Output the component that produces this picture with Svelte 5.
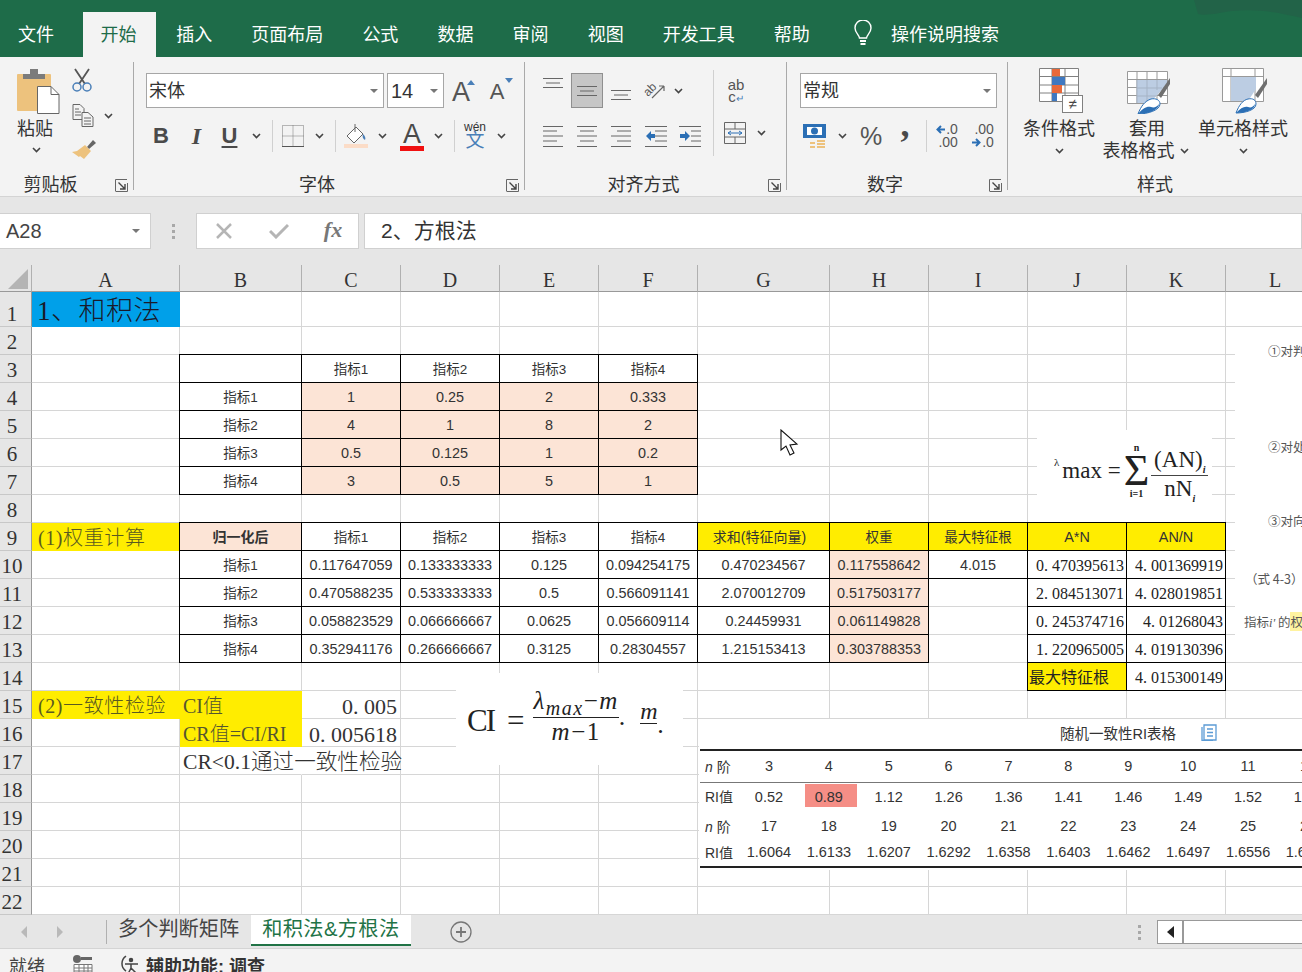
<script>
  const tabs = ['文件', '开始', '插入', '页面布局', '公式', '数据', '审阅', '视图', '开发工具', '帮助'];
  const cols = ['A', 'B', 'C', 'D', 'E', 'F', 'G', 'H', 'I', 'J', 'K', 'L'];
  const rowNums = Array.from({ length: 22 }, (_, i) => i + 1);

  const cells = {};
  const put = (ref, t, k) => (cells[ref] = { t, k });

  put('A1', '1、和积法', 'blue title');
  put('A9', '(1)权重计算', 'yel label');
  put('A15', '(2)一致性检验', 'yel label');

  // first matrix
  const m1 = [
    ['1', '0.25', '2', '0.333'],
    ['4', '1', '8', '2'],
    ['0.5', '0.125', '1', '0.2'],
    ['3', '0.5', '5', '1']
  ];
  put('B3', '', 'b');
  ['C', 'D', 'E', 'F'].forEach((c, i) => put(c + '3', '指标' + (i + 1), 'b c z'));
  m1.forEach((row, r) => {
    put('B' + (r + 4), '指标' + (r + 1), 'b c z');
    row.forEach((v, i) => put('CDEF'[i] + (r + 4), v, 'b c peach'));
  });

  // normalised matrix and weights
  put('B9', '归一化后', 'b c peach strong');
  ['C', 'D', 'E', 'F'].forEach((c, i) => put(c + '9', '指标' + (i + 1), 'b c z'));
  put('G9', '求和(特征向量)', 'b c yel sum');
  put('H9', '权重', 'b c z yel');
  put('I9', '最大特征根', 'b c z yel');
  put('J9', 'A*N', 'b c yel');
  put('K9', 'AN/N', 'b c yel');
  const m2 = [
    ['0.117647059', '0.133333333', '0.125', '0.094254175', '0.470234567', '0.117558642'],
    ['0.470588235', '0.533333333', '0.5', '0.566091141', '2.070012709', '0.517503177'],
    ['0.058823529', '0.066666667', '0.0625', '0.056609114', '0.24459931', '0.061149828'],
    ['0.352941176', '0.266666667', '0.3125', '0.28304557', '1.215153413', '0.303788353']
  ];
  const m3 = [
    ['0.470395613', '4.001369919'],
    ['2.084513071', '4.028019851'],
    ['0.245374716', '4.01268043'],
    ['1.220965005', '4.019130396']
  ];
  m2.forEach((row, r) => {
    put('B' + (r + 10), '指标' + (r + 1), 'b c z');
    row.forEach((v, i) => put('CDEFGH'[i] + (r + 10), v, i === 5 ? 'b c peach' : 'b c'));
    put('J' + (r + 10), m3[r][0], 'b sn');
    put('K' + (r + 10), m3[r][1], 'b sn');
  });
  put('I10', '4.015', 'b c');
  put('J14', '最大特征根', 'b yel maxroot');
  put('K14', '4.015300149', 'b sn');

  // consistency check
  put('B15', 'CI值', 'yel label tight');
  put('B16', 'CR值=CI/RI', 'yel label tight');
  put('C15', '0.005', 'big');
  put('C16', '0.005618', 'big');
  put('B17', 'CR<0.1通过一致性检验', 'wide');

  const cell = (c, r) => cells[c + r] ?? { t: '', k: '' };
  const isSerifNum = (k) => k.includes('sn') || k.includes('big');

  const riHead1 = ['3', '4', '5', '6', '7', '8', '9', '10', '11', '12'];
  const riVal1 = ['0.52', '0.89', '1.12', '1.26', '1.36', '1.41', '1.46', '1.49', '1.52', '1.54'];
  const riHead2 = ['17', '18', '19', '20', '21', '22', '23', '24', '25', '26'];
  const riVal2 = ['1.6064', '1.6133', '1.6207', '1.6292', '1.6358', '1.6403', '1.6462', '1.6497', '1.6556', '1.6587'];
</script>

{#snippet chev()}
  <svg class="chev" width="9" height="6" viewBox="0 0 9 6"><path d="M1 1l3.5 3.5L8 1" fill="none" stroke="#444" stroke-width="1.6" /></svg>
{/snippet}

{#snippet launcher()}
  <svg class="launcher" width="13" height="13" viewBox="0 0 13 13">
    <path d="M.5 12V.5H12" fill="none" stroke="#666" />
    <path d="M.5 12.5H12.5V4" fill="none" stroke="#666" />
    <path d="M3.5 3.5l6 6M10 5v5H5" fill="none" stroke="#444" stroke-width="1.4" />
  </svg>
{/snippet}

{#snippet dropTri()}
  <svg class="droptri" width="8" height="4" viewBox="0 0 8 4"><path d="M0 0h8L4 4z" fill="#777" /></svg>
{/snippet}

<div class="window">
  <header class="titlebar">
    <svg class="leaf" width="110" height="22" viewBox="0 0 110 22"><path d="M2 0h108v18c-20-4-40-10-70-7-14 2-26 5-34 3z" fill="#226348" /></svg>
    <nav class="tabs">
      {#each tabs as tab, i}
        <div class="tab" class:active={i === 1} class:first={i === 0}>{tab}</div>
      {/each}
      <svg class="bulb" width="18" height="26" viewBox="0 0 18 26">
        <path d="M5.5 18c0-3-4.500-5-4.500-10a8 8 0 0 1 16 0c0 5-4.500 7-4.500 10z" fill="none" stroke="#fff" stroke-width="1.4" />
        <path d="M6 21h6M6.500 24h5" stroke="#fff" stroke-width="2" />
      </svg>
      <div class="search">操作说明搜索</div>
    </nav>
  </header>

  <section class="ribbon">
    <div class="group clip">
      <div class="body clip-body">
        <div class="paste">
          <svg width="43" height="46" viewBox="0 0 43 46">
            <rect x="0" y="6" width="34" height="37" rx="1" fill="#edc27d" />
            <path d="M6 11V6h7V1h8v5h7v5z" fill="#7b7b7b" />
            <path d="M20.500 18.500H34l8 8v19H20.500z" fill="#fff" stroke="#666" />
            <path d="M34 18.500v8h8" fill="none" stroke="#666" />
          </svg>
          <span class="big-label">粘贴</span>
          {@render chev()}
        </div>
        <div class="clip-tools">
          <svg width="20" height="24" viewBox="0 0 20 24">
            <path d="M3 1l10 15M17 1L7 16" stroke="#555" stroke-width="1.800" fill="none" />
            <circle cx="5" cy="19" r="4" fill="none" stroke="#4a7fb8" stroke-width="1.500" />
            <circle cx="15" cy="19" r="4" fill="none" stroke="#4a7fb8" stroke-width="1.500" />
          </svg>
          <div class="copy-row">
            <svg width="22" height="23" viewBox="0 0 22 23" fill="none" stroke="#666">
              <path d="M1 .5h7l4 4v11H1zM3 5h4M3 8h6M3 11h6" />
              <path d="M10 8.500h6l5 4.500v9.500H10z" fill="#f3f3f3" />
              <path d="M12 14h7M12 17h7M12 20h7" />
            </svg>
            {@render chev()}
          </div>
          <svg width="24" height="21" viewBox="0 0 24 21">
            <path d="M15 8l6-7 3 3-7 6z" fill="#666" />
            <path d="M13 6l6 6-7 8-4-3-1 1-7-5 5-1z" fill="#edc27d" />
          </svg>
        </div>
      </div>
      <div class="foot foot-clip"><span class="foot-label">剪贴板</span>{@render launcher()}</div>
    </div>

    <div class="group font">
      <div class="body font-body">
        <div class="font-row1">
          <div class="box font-name"><span>宋体</span>{@render dropTri()}</div>
          <div class="box font-size"><span>14</span>{@render dropTri()}</div>
          <div class="grow">A<svg width="8" height="5" viewBox="0 0 8 5"><path d="M4 0l4 5H0z" fill="#4a7fb8" /></svg></div>
          <div class="grow small">A<svg width="8" height="5" viewBox="0 0 8 5"><path d="M0 0h8L4 5z" fill="#4a7fb8" /></svg></div>
        </div>
        <div class="font-row2">
          <span class="fmt bold">B</span>
          <span class="fmt ital">I</span>
          <span class="fmt under">U</span>
          {@render chev()}
          <i class="sep"></i>
          <svg width="22" height="22" viewBox="0 0 22 22" fill="none" stroke="#777" stroke-dasharray="1 1"><path d="M.5.5h21v21H.5zM11 .5v21M.5 11h21" /><path d="M0 21.500h22" stroke-dasharray="none" stroke="#555" /></svg>
          {@render chev()}
          <i class="sep"></i>
          <svg width="24" height="24" viewBox="0 0 24 24">
            <path d="M12 3l-9 9 7 7 9-9z" fill="#fff" stroke="#666" />
            <path d="M11 0v8" stroke="#666" />
            <path d="M19 10c2 2 3 4 2 6-2-1-3-3-2-6z" fill="#4a7fb8" />
            <rect y="20" width="24" height="4" fill="#fbdcc7" />
          </svg>
          {@render chev()}
          <div class="color-a">A<i></i></div>
          {@render chev()}
          <i class="sep"></i>
          <div class="wen"><span>wén</span><b>文</b></div>
          {@render chev()}
        </div>
      </div>
      <div class="foot"><span class="foot-label">字体</span>{@render launcher()}</div>
    </div>

    <div class="group align">
      <div class="body align-body">
        <div class="align-left">
          <div class="align-row1">
            <svg width="20" height="10" viewBox="0 0 20 10" stroke="#666"><path d="M0 .5h20M3 5h14M0 9.500h20" /></svg>
            <div class="sel"><svg width="20" height="10" viewBox="0 0 20 10" stroke="#666"><path d="M0 .5h20M3 5h14M0 9.500h20" /></svg></div>
            <svg class="low" width="20" height="10" viewBox="0 0 20 10" stroke="#666"><path d="M0 .5h20M3 5h14M0 9.500h20" /></svg>
            <svg width="22" height="22" viewBox="0 0 22 22">
              <text x="1" y="14" transform="rotate(-45 6 12)" font-size="12" font-family="Liberation Sans" fill="#555">ab</text>
              <path d="M8 18L20 6M20 6h-5M20 6v5" fill="none" stroke="#666" stroke-width="1.200" />
            </svg>
            {@render chev()}
          </div>
          <div class="align-row2">
            <svg width="20" height="21" viewBox="0 0 20 21" stroke="#666"><path d="M0 .5h20M0 5h14M0 10h20M0 15h14M0 20.500h20" /></svg>
            <svg width="20" height="21" viewBox="0 0 20 21" stroke="#666"><path d="M0 .5h20M3 5h14M0 10h20M3 15h14M0 20.500h20" /></svg>
            <svg width="20" height="21" viewBox="0 0 20 21" stroke="#666"><path d="M0 .5h20M6 5h14M0 10h20M6 15h14M0 20.500h20" /></svg>
            <svg width="22" height="21" viewBox="0 0 22 21"><path d="M0 .5h22M10 5h12M10 10h12M10 15h12M0 20.500h22" stroke="#666" /><path d="M1 10l5-5v3h4v4H6v3z" fill="#2b6fb5" /></svg>
            <svg width="22" height="21" viewBox="0 0 22 21"><path d="M0 .5h22M12 5h10M12 10h10M12 15h10M0 20.500h22" stroke="#666" /><path d="M11 10L6 5v3H1v4h5v3z" fill="#2b6fb5" /></svg>
          </div>
        </div>
        <div class="align-right">
          <div class="wrap"><span>ab</span><span>c<em>↵</em></span></div>
          <div class="merge">
            <svg width="22" height="22" viewBox="0 0 22 22" fill="none" stroke="#666"><path d="M.5.5h21v21H.5zM.5 7h21M.5 15h21M11 .5V7M11 15v6.500" /><path d="M4 11h14M4 11l3-2M4 11l3 2M18 11l-3-2M18 11l-3 2" stroke="#2b6fb5" /></svg>
            {@render chev()}
          </div>
        </div>
      </div>
      <div class="foot"><span class="foot-label">对齐方式</span>{@render launcher()}</div>
    </div>

    <div class="group number">
      <div class="body number-body">
        <div class="box num-format"><span>常规</span>{@render dropTri()}</div>
        <div class="number-row2">
          <svg width="26" height="26" viewBox="0 0 26 26">
            <rect x="1" y="1" width="23" height="14" fill="#2b6fb5" />
            <rect x="5" y="4" width="15" height="8" fill="#fff" />
            <circle cx="12.500" cy="8" r="3.500" fill="#2b6fb5" />
            <path d="M15 18h8M15 21h8M15 24h8M8 20h5M8 24h5" stroke="#edc27d" stroke-width="2" />
          </svg>
          {@render chev()}
          <span class="pct">%</span>
          <span class="comma">,</span>
          <i class="sep"></i>
          <div class="dec">
            <span><svg width="9" height="9" viewBox="0 0 9 9"><path d="M9 4.500H2M5 1L1.500 4.500 5 8" fill="none" stroke="#2b6fb5" stroke-width="2" /></svg>.0</span>
            <span>.00</span>
          </div>
          <div class="dec">
            <span>.00</span>
            <span><svg width="9" height="9" viewBox="0 0 9 9"><path d="M0 4.500h7M4 1l3.500 3.500L4 8" fill="none" stroke="#2b6fb5" stroke-width="2" /></svg>.0</span>
          </div>
        </div>
      </div>
      <div class="foot"><span class="foot-label">数字</span>{@render launcher()}</div>
    </div>

    <div class="group styles">
      <div class="body styles-body">
        <div class="style-btn">
          <svg width="48" height="46" viewBox="0 0 48 46">
            <path d="M4.500.500h39v33h-39zM4.500 8.500h39M4.500 17h39M4.500 25h39M17 .500v33M30 .500v33" fill="#fff" stroke="#808080" />
            <rect x="17" y="1" width="8" height="7" fill="#e8693a" />
            <rect x="17" y="9" width="13" height="8" fill="#3f78c0" />
            <rect x="17" y="17" width="10" height="8" fill="#e8693a" />
            <rect x="17" y="25" width="5" height="8" fill="#3f78c0" />
            <rect x="27.500" y="27.500" width="20" height="17" fill="#fff" stroke="#808080" />
            <text x="37.500" y="41" text-anchor="middle" font-size="15" font-family="Liberation Sans" fill="#444">≠</text>
          </svg>
          <span class="big-label">条件格式</span>
          {@render chev()}
        </div>
        <div class="style-btn">
          <svg width="48" height="46" viewBox="0 0 48 46">
            <path d="M4.500 3.500h40v32h-40zM4.500 11.500h40M4.500 19.500h40M4.500 27.500h40M14 3.500v32M24 3.500v32M34 3.500v32" fill="#fff" stroke="#999" />
            <path d="M14 12h30v4L27 35H14z" fill="#bccde3" />
            <path d="M14 12v23M24 12v23M34 12v10M14 20h25M14 28h19" stroke="#a5b3c5" />
            <path d="M47 10v6L38 30l-3-3z" fill="#6f6f6f" />
            <path d="M15 46c3-8 7-13 13-15 5-1 9 1 9 5 0 6-12 10-22 10z" fill="#fff" stroke="#2b6fb5" />
            <path d="M15 46c5-6 9-8 13-7 3 1 6 0 8-3 0 6-11 10-21 10z" fill="#2b6fb5" />
          </svg>
          <span class="big-label">套用</span>
          <span class="big-label second">表格格式 {@render chev()}</span>
        </div>
        <div class="style-btn">
          <svg width="48" height="46" viewBox="0 0 48 46">
            <path d="M3.500 .500h41v33h-41zM3.500 8.500h41M12 .500v33M36 .500v33" fill="#fff" stroke="#999" />
            <path d="M12 9h25v12l-8 12H12z" fill="#bccde3" />
            <path d="M48 10v6L39 30l-3-3z" fill="#6f6f6f" />
            <path d="M17 45c3-8 7-13 12-14 5-1 8 1 8 5 0 6-11 9-20 9z" fill="#fff" stroke="#2b6fb5" />
            <path d="M17 45c5-5 8-7 12-6 3 1 5 0 7-3 0 6-10 9-19 9z" fill="#2b6fb5" />
          </svg>
          <span class="big-label">单元格样式</span>
          {@render chev()}
        </div>
      </div>
      <div class="foot foot-styles"><span class="foot-label">样式</span></div>
    </div>
  </section>

  <section class="formula">
    <div class="namebox"><span>A28</span>{@render dropTri()}</div>
    <div class="grip"><i></i><i></i><i></i></div>
    <div class="fx-buttons">
      <svg width="18" height="18" viewBox="0 0 18 18"><path d="M2 2l14 14M16 2L2 16" stroke="#b5b5b5" stroke-width="2.500" /></svg>
      <svg width="20" height="16" viewBox="0 0 20 16"><path d="M1 8l6 6L19 2" fill="none" stroke="#b5b5b5" stroke-width="3" /></svg>
      <span class="fx">fx</span>
    </div>
    <div class="fx-input">2、方根法</div>
  </section>

  <section class="sheet">
    <div class="grid">
      <div class="corner"><svg width="20" height="20" viewBox="0 0 20 20"><path d="M20 0v20H0z" fill="#b4b4b4" /></svg></div>
      {#each cols as c}
        <div class="colhead">{c}</div>
      {/each}
      {#each rowNums as r}
        <div class="rowhead">{r}</div>
        {#each cols as c}
          {@const x = cell(c, r)}
          <div class="cell {x.k}">
            {#if isSerifNum(x.k)}
              <span>{x.t.split('.')[0]}<span class="dot">.</span>{x.t.split('.')[1]}</span>
            {:else}
              {x.t}
            {/if}
          </div>
        {/each}
      {/each}
    </div>

    <div class="pic pic-lambda">
      <span class="lam">λ</span><span class="lam-max">max =</span>
      <div class="sigma"><small>n</small><span>Σ</span><small>i=1</small></div>
      <div class="frac">
        <span>(AN)<sub>i</sub></span>
        <span>nN<sub>i</sub></span>
      </div>
    </div>

    <div class="pic pic-ci">
      <span class="ci">CI</span>
      <span class="eq">=</span>
      <div class="frac2">
        <span><em>λ<sub>max</sub></em>−<em>m</em></span>
        <span><em>m</em>−1</span>
      </div>
      <span class="ci-dot">.</span>
      <div class="frac3"><em>m</em></div>
      <span class="ci-dot">.</span>
    </div>

    <div class="pic pic-notes">
      <p class="n1">①对判</p>
      <p class="n2">②对处</p>
      <p class="n3">③对向</p>
      <p class="n4">（式 4-3）</p>
      <p class="n5">指标<em>i'</em> 的<mark>权</mark></p>
    </div>

    <div class="pic pic-ri">
      <div class="ri-title">
        <span>随机一致性RI表格</span>
        <svg width="16" height="17" viewBox="0 0 16 17" fill="none" stroke="#5b9bd5" stroke-width="1.300"><path d="M3 1h12v15H3zM1 3v13.500h11M6 5h6M6 8.500h6M6 12h6" /></svg>
      </div>
      <div class="ri-grid">
        <div class="ri-row r1">
          <span class="ri-l"><em>n</em> 阶</span>{#each riHead1 as v}<span>{v}</span>{/each}
        </div>
        <div class="ri-row r2">
          <span class="ri-l">RI值</span>{#each riVal1 as v, i}<span class:hit={i === 1}>{v}</span>{/each}
        </div>
        <div class="ri-row r3">
          <span class="ri-l"><em>n</em> 阶</span>{#each riHead2 as v}<span>{v}</span>{/each}
        </div>
        <div class="ri-row r4">
          <span class="ri-l">RI值</span>{#each riVal2 as v}<span>{v}</span>{/each}
        </div>
      </div>
    </div>

    <svg class="cursor" width="20" height="28" viewBox="0 0 20 28">
      <path d="M1 1v20l5-4 4 9 4-2-4-8 7-1z" fill="#fff" stroke="#111" stroke-width="1.100" />
    </svg>
  </section>

  <section class="sheetbar">
    <svg class="nav-arrows" width="42" height="12" viewBox="0 0 42 12"><path d="M6 0v12L0 6zM36 0v12l6-6z" fill="#b9b9b9" /></svg>
    <i class="bar-sep"></i>
    <div class="sheet-tab">多个判断矩阵</div>
    <div class="sheet-tab on">和积法&amp;方根法</div>
    <svg class="add" width="22" height="22" viewBox="0 0 22 22" fill="none" stroke="#777" stroke-width="1.300"><circle cx="11" cy="11" r="10" /><path d="M6 11h10M11 6v10" stroke-width="1.800" /></svg>
    <div class="grip small-grip"><i></i><i></i><i></i></div>
    <div class="scroll">
      <div class="scroll-btn"><svg width="7" height="12" viewBox="0 0 7 12"><path d="M7 0v12L0 6z" fill="#222" /></svg></div>
      <div class="scroll-track"></div>
    </div>
  </section>

  <footer class="status">
    <span class="ready">就绪</span>
    <svg width="20" height="20" viewBox="0 0 20 20"><circle cx="4" cy="4" r="4" fill="#666" /><path d="M8 2h11v3H8z" fill="#666" /><path d="M1 9.500h18V20H1zM1 13h18M1 16h18M6 9.500V20M11 9.500V20M15 9.500V20" fill="#fff" stroke="#777" /></svg>
    <svg class="a11y" width="21" height="20" viewBox="0 0 21 20" fill="none" stroke="#444" stroke-width="1.500"><path d="M6 1a9 9 0 0 0 0 15" /><circle cx="11" cy="5" r="1.500" fill="#444" /><path d="M5 9h13M11 9v4l-3 6M11 13l5 5" /></svg>
    <strong>辅助功能: 调查</strong>
  </footer>
</div>

<style>
  :global(body) {
    background: #fff;
  }

  .window {
    width: 1302px;
    height: 972px;
    overflow: hidden;
    display: flex;
    flex-direction: column;
    font-family: "Liberation Sans", "Noto Sans CJK SC", sans-serif;
    color: #444;
  }

  /* title bar and ribbon tabs */
  .titlebar {
    position: relative;
    height: 57px;
    background: #1e6c49;
    overflow: hidden;
  }

  .leaf {
    position: absolute;
    top: 0;
    right: 0;
  }

  .tabs {
    position: relative;
    height: 45px;
    margin-top: 12px;
    display: flex;
    align-items: stretch;
    gap: 5.1px;
    padding-left: 1px;
    font-size: 18px;
    color: #fff;
  }

  .tab {
    padding: 0 17px;
    display: flex;
    align-items: center;
    padding-bottom: 3px;
    box-sizing: border-box;
  }

  .tab.first {
    margin-right: 7px;
  }

  .tab.active {
    background: #f3f3f3;
    color: #1e6c49;
    padding-left: 17.500px;
    padding-right: 19.500px;
    margin-right: -2px;
  }

  .bulb {
    margin: 8px 0 0 22px;
  }

  .search {
    margin-left: 14px;
    display: flex;
    align-items: center;
    padding-bottom: 3px;
  }

  /* ribbon */
  .ribbon {
    height: 140px;
    box-sizing: border-box;
    background: #f3f3f3;
    border-bottom: 1px solid #d4d4d4;
    display: flex;
    padding-top: 5px;
  }

  .group {
    height: 128px;
    box-sizing: border-box;
    border-right: 1px solid #a9a9a9;
    display: flex;
    flex-direction: column;
  }

  .clip { width: 134px; }
  .font { width: 391px; }
  .align { width: 262px; }
  .number { width: 221px; }
  .styles { flex: 1; border-right: none; }

  .body {
    height: 102px;
    flex: none;
    box-sizing: border-box;
  }

  .foot {
    flex: 1;
    display: flex;
    align-items: center;
    padding-right: 5px;
    padding-top: 12px;
  }

  .foot-label {
    flex: 1;
    text-align: center;
    font-size: 18px;
    padding-right: 6px;
    color: #333;
    line-height: 1;
  }

  .foot-clip .foot-label {
    padding-right: 14px;
  }

  .big-label {
    font-size: 18px;
    line-height: 22px;
    color: #333;
    white-space: nowrap;
  }

  .clip-body {
    display: flex;
    padding: 6px 0 0 18px;
  }

  .paste {
    width: 42px;
    display: flex;
    flex-direction: column;
    align-items: center;
    gap: 3px;
    margin-left: -1px;
  }

  .paste .big-label {
    margin: 1px 0 0 -6px;
  }

  .paste .chev {
    margin: 4px 0 0 -4px;
  }

  .clip-tools {
    margin-left: 13px;
    display: flex;
    flex-direction: column;
    gap: 12px;
  }

  .copy-row {
    display: flex;
    align-items: center;
    gap: 10px;
  }

  .box {
    height: 35px;
    box-sizing: border-box;
    background: #fff;
    border: 1px solid #a6a6a6;
    display: flex;
    align-items: center;
    justify-content: space-between;
    padding: 0 5px 0 2px;
    font-size: 18px;
    line-height: 32px;
    color: #333;
  }

  .droptri {
    flex: none;
  }

  .font-body {
    padding: 11px 0 0 12px;
  }

  .font-row1 {
    display: flex;
    gap: 3px;
    align-items: center;
  }

  .font-name { width: 238px; }
  .font-size { width: 57px; padding-left: 3px; font-size: 20px; }

  .grow {
    width: 28px;
    position: relative;
    text-align: center;
    font-size: 27px;
    line-height: 30px;
    color: #555;
    margin-top: 3px;
  }

  .grow svg {
    position: absolute;
    top: 3px;
    right: 0;
  }

  .grow.small {
    width: 44px;
    margin-left: -3px;
    font-size: 22px;
  }

  .grow.small svg {
    top: 1px;
    right: 6px;
  }

  .font-row2 {
    margin-top: 11px;
    height: 34px;
    display: grid;
    grid-template-columns: 30px 41px 25px 28px 4px 37px 16px 16px 26px 26px 34px 18px 14px 28px 24px;
    justify-items: center;
    align-items: center;
  }

  .sep {
    display: block;
    width: 1px;
    height: 32px;
    background: #d0d0d0;
  }

  .fmt {
    font-size: 22px;
    color: #4a4a4a;
  }

  .bold { font-weight: 700; }
  .ital { font-family: "Liberation Serif", serif; font-style: italic; font-weight: 700; font-size: 24px; }
  .under { font-weight: 700; text-decoration: underline; text-underline-offset: 3px; }

  .color-a {
    width: 24px;
    font-size: 27px;
    line-height: 25px;
    text-align: center;
    color: #4a4a4a;
  }

  .color-a i {
    display: block;
    height: 5px;
    background: #f01010;
    margin-top: -1px;
  }

  .wen {
    display: flex;
    flex-direction: column;
    align-items: center;
    line-height: 1;
    margin-top: -2px;
  }

  .wen span { font-size: 12px; color: #333; }
  .wen b { font-size: 19px; color: #4a7fb8; font-weight: 400; margin-top: -2px; }

  .align-body {
    display: flex;
  }

  .align-left {
    width: 178px;
    margin-left: 10px;
    padding-top: 11px;
  }

  .align-row1 {
    height: 35px;
    display: grid;
    grid-template-columns: 36px 32px 36px 32px 14px;
    justify-items: center;
    align-items: center;
    align-content: center;
  }

  .align-row1 > svg:first-child {
    margin-top: -15px;
  }

  .low {
    margin-top: 9px;
  }

  .sel {
    width: 32px;
    height: 35px;
    box-sizing: border-box;
    background: #c6c6c6;
    border: 1px solid #8f8f8f;
    display: flex;
    align-items: center;
    justify-content: center;
  }

  .align-row2 {
    margin-top: 18px;
    display: grid;
    grid-template-columns: 36px 32px 36px 34px 34px;
    justify-items: center;
    align-items: center;
  }

  .align-right {
    margin-top: 8px;
    height: 86px;
    border-left: 1px solid #d0d0d0;
    padding-left: 13px;
    display: flex;
    flex-direction: column;
  }

  .wrap {
    width: 18px;
    margin-top: 9px;
    display: flex;
    flex-direction: column;
    align-items: center;
    font-size: 15px;
    line-height: 12px;
    color: #555;
  }

  .wrap em {
    color: #4a7fb8;
    font-style: normal;
    font-size: 10px;
  }

  .merge {
    margin-top: 17px;
    display: flex;
    align-items: center;
    gap: 11px;
    margin-left: -3px;
  }

  .number-body {
    padding: 11px 0 0 13px;
  }

  .num-format {
    width: 197px;
  }

  .number-row2 {
    margin-top: 11px;
    height: 34px;
    display: grid;
    grid-template-columns: 30px 24px 34px 34px 8px 34px 38px;
    justify-items: center;
    align-items: center;
  }

  .pct {
    font-size: 25px;
    font-weight: 300;
    color: #555;
  }

  .comma {
    font-size: 36px;
    font-weight: 700;
    line-height: 16px;
    transform: translateY(-12px);
    font-family: "Liberation Serif", serif;
    color: #4a4a4a;
  }

  .dec {
    display: flex;
    flex-direction: column;
    align-items: flex-end;
    font-size: 14px;
    line-height: 13px;
    color: #555;
  }

  .dec svg {
    margin-right: 1px;
  }

  .styles-body {
    display: grid;
    grid-template-columns: 86px 90px 102px;
    padding-left: 8px;
    padding-top: 6px;
  }

  .style-btn {
    display: flex;
    flex-direction: column;
    align-items: center;
  }

  .style-btn > svg:first-child {
    margin-bottom: 4px;
  }

  .style-btn .chev {
    margin-top: 8px;
  }

  .second {
    margin-left: -3px;
  }

  .second .chev {
    margin: 0 0 3px 0;
  }

  .foot-styles .foot-label {
    padding: 0;
  }

  .foot-styles {
    padding-right: 0;
  }

  /* formula bar */
  .formula {
    height: 68px;
    background: #e6e6e6;
    padding-top: 16px;
    box-sizing: border-box;
    display: flex;
    align-items: flex-start;
    color: #444;
  }

  .namebox {
    width: 151px;
    height: 36px;
    box-sizing: border-box;
    background: #fff;
    border: 1px solid #d0d0d0;
    border-left: none;
    display: flex;
    align-items: center;
    justify-content: space-between;
    padding: 0 10px 0 6px;
    font-size: 20px;
  }

  .grip {
    width: 45px;
    height: 36px;
    display: flex;
    flex-direction: column;
    align-items: center;
    justify-content: center;
    gap: 3px;
  }

  .grip i {
    width: 3px;
    height: 3px;
    background: #a8a8a8;
  }

  .fx-buttons {
    width: 163px;
    height: 36px;
    box-sizing: border-box;
    background: #fff;
    border: 1px solid #d0d0d0;
    display: grid;
    grid-template-columns: 54px 55px 54px;
    justify-items: center;
    align-items: center;
  }

  .fx {
    font-family: "Liberation Serif", serif;
    font-style: italic;
    font-weight: 700;
    font-size: 22px;
    color: #777;
    margin-top: -3px;
  }

  .fx-input {
    flex: 1;
    margin-left: 5px;
    height: 36px;
    box-sizing: border-box;
    background: #fff;
    border: 1px solid #d0d0d0;
    padding-left: 16px;
    font-size: 21px;
    line-height: 34px;
    color: #333;
  }

  /* worksheet */
  .sheet {
    position: relative;
    height: 650px;
    overflow: hidden;
    flex: none;
    background: #fff;
  }

  .grid {
    display: grid;
    grid-template-columns: 32px 148px 122px 99px 99px 99px 99px 132px 99px 99px 99px 99px 99px;
    grid-template-rows: 27px 35px repeat(21, 28px);
  }

  .corner {
    background: #e6e6e6;
    border-right: 1px solid #b0b0b0;
    border-bottom: 1px solid #999;
    box-sizing: border-box;
    padding: 4px 0 0 8px;
  }

  .colhead {
    background: #e6e6e6;
    border-right: 1px solid #b0b0b0;
    border-bottom: 1px solid #999;
    box-sizing: border-box;
    text-align: center;
    font-family: "Liberation Serif", serif;
    font-size: 20px;
    line-height: 31px;
    color: #333;
  }

  .rowhead {
    background: #e6e6e6;
    border-right: 1px solid #999;
    border-bottom: 1px solid #c8c8c8;
    box-sizing: border-box;
    display: flex;
    align-items: flex-end;
    justify-content: center;
    padding-right: 7px;
    font-family: "Liberation Serif", serif;
    font-size: 21px;
    line-height: 24px;
    color: #333;
  }

  .cell {
    box-sizing: border-box;
    border-right: 1px solid #d6d6d6;
    border-bottom: 1px solid #d6d6d6;
    min-width: 0;
    white-space: nowrap;
    font-size: 14px;
    line-height: 29px;
    color: #333;
  }

  .c {
    text-align: center;
    font-size: 14.400px;
  }

  .z {
    font-size: 13.500px;
  }

  .sum {
    font-size: 14px;
    padding-right: 8px;
  }

  .b {
    border-color: #000;
    box-shadow: 0 -1px 0 #000, -1px 0 0 #000, -1px -1px 0 #000;
  }

  .peach { background: #fce4d6; }
  .yel { background: #ffed00; }
  .yel:not(.b) { border-color: #ffed00; }
  .blue { background: #00a0e9; border-color: #00a0e9; }

  .strong { font-weight: 700; font-size: 14px; }

  .title {
    font-family: "Liberation Serif", "Noto Sans CJK SC", serif;
    font-size: 27px;
    line-height: 39px;
    letter-spacing: .5px;
    padding-left: 5px;
    font-weight: 300;
    color: #1a1a2a;
  }

  .label {
    font-family: "Liberation Serif", "Noto Sans CJK SC", serif;
    font-size: 20px;
    line-height: 30px;
    letter-spacing: .6px;
    padding-left: 6px;
    font-weight: 300;
    color: #5a5a20;
  }

  .tight {
    padding-left: 3px;
    letter-spacing: 0;
    color: #555530;
  }

  .sn {
    font-family: "Liberation Serif", serif;
    font-size: 16px;
    text-align: right;
    padding-right: 2px;
    color: #222;
  }

  .dot {
    display: inline-block;
    width: 8px;
    text-align: left;
  }

  .big {
    font-family: "Liberation Serif", serif;
    font-size: 22px;
    line-height: 31px;
    text-align: right;
    padding-right: 3px;
    color: #333;
  }

  .big .dot {
    width: 11px;
  }

  .wide {
    font-family: "Liberation Serif", "Noto Sans CJK SC", serif;
    font-size: 21.600px;
    line-height: 31px;
    padding-left: 3px;
    font-weight: 300;
    border-right-color: transparent;
    position: relative;
    z-index: 1;
  }

  .maxroot {
    font-size: 16px;
    color: #222;
    padding-left: 1px;
  }

  /* pictures pasted on the sheet */
  .pic {
    position: absolute;
    background: #fff;
    font-family: "Liberation Serif", "Noto Sans CJK SC", serif;
    color: #222;
  }

  .pic-lambda {
    left: 1037px;
    top: 165px;
    width: 175px;
    height: 92px;
    display: flex;
    align-items: center;
    padding: 0 0 10px 17px;
    box-sizing: border-box;
  }

  .lam {
    font-size: 11px;
    margin-bottom: 18px;
  }

  .lam-max {
    font-size: 23px;
    margin-left: 3px;
    white-space: nowrap;
  }

  .sigma {
    display: flex;
    flex-direction: column;
    align-items: center;
    margin-left: 3px;
    line-height: 1;
  }

  .sigma small {
    font-size: 10px;
    font-weight: 700;
  }

  .sigma span {
    font-size: 44px;
    line-height: 36px;
  }

  .frac {
    margin: 6px 0 0 2px;
    display: flex;
    flex-direction: column;
    align-items: center;
    font-size: 23px;
    line-height: 26px;
    width: 57px;
  }

  .frac span:first-child {
    border-bottom: 1.500px solid #444;
    width: 100%;
    text-align: center;
    padding-bottom: 2px;
  }

  .frac sub {
    font-size: 10px;
    font-style: italic;
    font-weight: 700;
    line-height: 0;
  }

  .pic-ci {
    left: 456px;
    top: 408px;
    width: 227px;
    height: 92px;
    display: flex;
    align-items: center;
    padding: 0 0 0 11px;
    box-sizing: border-box;
    color: #222;
  }

  .ci {
    font-size: 31px;
    letter-spacing: -2px;
    margin-top: 4px;
  }

  .eq {
    font-size: 31px;
    margin: 4px 0 0 13px;
  }

  .frac2 {
    margin: 0 0 6px 9px;
    display: flex;
    flex-direction: column;
    align-items: center;
    font-size: 25px;
    line-height: 28px;
    letter-spacing: 1.500px;
    white-space: nowrap;
  }

  .frac2 em, .frac3 em {
    font-style: italic;
  }

  .frac2 span:first-child {
    border-bottom: 1.500px solid #222;
    padding-bottom: 2px;
  }

  .frac2 sub {
    font-size: 20px;
    line-height: 0;
  }

  .ci-dot {
    font-size: 26px;
    margin-bottom: 4px;
  }

  .frac3 {
    margin-left: 15px;
    margin-bottom: 16px;
    font-size: 24px;
    line-height: 24px;
    border-bottom: 1.500px solid #222;
    width: 17px;
    height: 24px;
    text-align: center;
  }

  .pic-ci .frac3 + .ci-dot {
    margin: 12px 0 0 0;
  }

  .pic-notes {
    left: 1235px;
    top: 62px;
    width: 67px;
    height: 335px;
    overflow: hidden;
    font-size: 12.500px;
    color: #555;
    white-space: nowrap;
    font-family: "Noto Sans CJK SC", sans-serif;
  }

  .pic-notes p {
    margin: 0;
    line-height: 18px;
  }

  .n1 { padding: 15px 0 0 33px; }
  .n2 { padding: 78px 0 0 33px; }
  .n3 { padding: 56px 0 0 33px; }
  .n4 { padding: 40px 0 0 10px; }
  .n5 { padding: 25px 0 0 9px; }

  .pic-notes em {
    font-family: "Liberation Serif", serif;
  }

  .pic-notes mark {
    background: #fff3a0;
    color: #555;
  }

  .pic-ri {
    left: 699px;
    top: 454px;
    width: 603px;
    height: 151px;
    font-family: "Liberation Sans", "Noto Sans CJK SC", sans-serif;
    color: #333;
    overflow: hidden;
  }

  .ri-title {
    height: 30px;
    box-sizing: border-box;
    padding: 0 0 3px 361px;
    display: flex;
    align-items: center;
    font-size: 14.500px;
    gap: 25px;
  }

  .ri-grid {
    border-top: 2px solid #222;
    border-bottom: 2px solid #222;
    margin: 0 0 0 1px;
    width: 640px;
  }

  .ri-row {
    display: grid;
    grid-template-columns: 39px repeat(10, 59.900px);
    justify-items: center;
    align-items: center;
    font-size: 14.500px;
  }

  .ri-l {
    justify-self: start;
    padding-left: 5px;
    white-space: nowrap;
    font-size: 14px;
  }

  .ri-l em {
    font-family: "Liberation Sans", sans-serif;
  }

  .r1 { height: 32px; box-sizing: border-box; padding-bottom: 2px; border-bottom: 1px solid #777; }
  .r2 { height: 24px; }
  .r2 > span { line-height: 28px; height: 24px; }
  .r3 { height: 34px; box-sizing: border-box; padding-top: 3px; }
  .r4 { height: 25px; box-sizing: border-box; padding: 1px 0 4px; }

  .r2 > .hit {
    width: 52px;
    height: 23px;
    line-height: 26px;
    box-sizing: border-box;
    margin-left: 4px;
    padding-right: 4px;
    text-align: center;
    background: #f58e86;
  }

  .cursor {
    position: absolute;
    left: 780px;
    top: 164px;
  }

  /* sheet tabs and status */
  .sheetbar {
    height: 34px;
    flex: none;
    background: #e6e6e6;
    display: flex;
    align-items: flex-start;
    border-bottom: 1px solid #d4d4d4;
    box-sizing: border-box;
  }

  .nav-arrows {
    margin: 11px 0 0 21px;
  }

  .bar-sep {
    width: 1px;
    height: 24px;
    background: #b0b0b0;
    margin: 5px 0 0 43px;
  }

  .sheet-tab {
    font-size: 20.200px;
    line-height: 28px;
    padding: 0 12px 0 11px;
    height: 30px;
    color: #444;
  }

  .sheet-tab.on {
    box-sizing: border-box;
    background: #fff;
    color: #217346;
    border-bottom: 2px solid #217346;
    padding: 0 11px;
    width: 160px;
    height: 31px;
    line-height: 28px;
    letter-spacing: .4px;
    white-space: nowrap;
  }

  .add {
    margin: 6px 0 0 39px;
  }

  .small-grip {
    margin-left: 645px;
    width: 44px;
    height: 34px;
  }

  .scroll {
    margin: 5px 0 0 -4px;
    flex: 1;
    display: flex;
    height: 24px;
    background: #fff;
    border: 1px solid #999;
    border-right: none;
    box-sizing: border-box;
  }

  .scroll-btn {
    width: 24px;
    border-right: 2px solid #999;
    display: flex;
    align-items: center;
    justify-content: center;
  }

  .status {
    flex: 1;
    min-height: 0;
    background: #f3f3f3;
    display: flex;
    align-items: flex-start;
    padding: 6px 0 0 9px;
    font-size: 18px;
    line-height: 24px;
    color: #444;
  }

  .status svg {
    margin-left: 28px;
  }

  .status .a11y {
    margin-left: 27px;
  }

  .status strong {
    margin-left: 5px;
    color: #333;
  }
</style>
